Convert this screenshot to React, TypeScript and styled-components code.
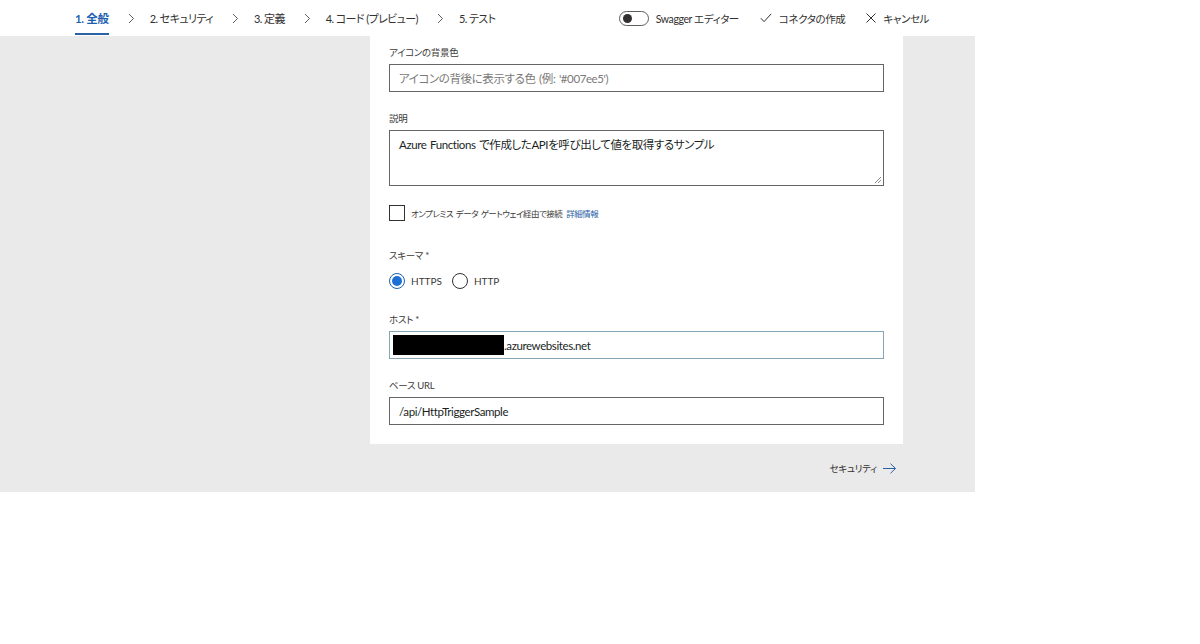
import React from 'react';
import styled, { createGlobalStyle } from 'styled-components';

const GlobalStyle = createGlobalStyle`
  html, body {
    margin: 0;
    padding: 0;
    background: #ffffff;
  }
  body {
    font-family: Lato, 'Noto Sans CJK JP', sans-serif;
    font-feature-settings: 'palt';
    color: #323130;
  }
`;

const Frame = styled.div`
  width: 975px;
  height: 492px;
  display: flex;
  flex-direction: column;
  background: #eaeaea;
`;

const TopBar = styled.div`
  height: 36px;
  background: #ffffff;
  display: flex;
  align-items: stretch;
  justify-content: space-between;
  padding-left: 75px;
  padding-right: 46px;
`;

const Steps = styled.div`
  display: flex;
  align-items: stretch;
`;

const Step = styled.div<{ $active?: boolean }>`
  position: relative;
  display: flex;
  align-items: center;
  font-size: ${p => (p.$active ? 11.5 : 11)}px;
  letter-spacing: ${p => (p.$active ? -0.3 : -0.6)}px;
  color: ${p => (p.$active ? '#1d5fb0' : '#323130')};
  font-weight: ${p => (p.$active ? 700 : 400)};
  white-space: nowrap;
  &::after {
    content: '';
    position: absolute;
    left: 0;
    right: 0;
    bottom: 1px;
    height: 2px;
    background: ${p => (p.$active ? '#2a62a8' : 'transparent')};
  }
`;

const Chevron = styled.div`
  display: flex;
  align-items: center;
  padding: 0 15px 0 19px;
  color: #605e5c;
`;

const Actions = styled.div`
  display: flex;
  align-items: center;
  gap: 21px;
  font-size: 10.5px;
  letter-spacing: -0.4px;
`;

const Action = styled.div`
  display: flex;
  align-items: center;
  gap: 7px;
  white-space: nowrap;
  color: #323130;
`;

const Toggle = styled.div`
  width: 25px;
  height: 13px;
  border: 1px solid #605e5c;
  border-radius: 8px;
  display: flex;
  align-items: center;
  padding-left: 3px;
  &::before {
    content: '';
    width: 9px;
    height: 9px;
    border-radius: 50%;
    background: #323130;
  }
`;

const Body = styled.div`
  flex: 1;
  display: flex;
  flex-direction: column;
  align-items: flex-start;
  padding-left: 370px;
`;

const Card = styled.div`
  width: 533px;
  background: #ffffff;
  padding: 8px 19px 19px 19px;
  box-sizing: border-box;
  display: flex;
  flex-direction: column;
`;

const Field = styled.div<{ $gap?: number }>`
  display: flex;
  flex-direction: column;
  margin-top: ${p => p.$gap ?? 0}px;
`;

const Label = styled.div`
  font-size: 9.5px;
  letter-spacing: -0.3px;
  color: #3b3a39;
  height: 20px;
  line-height: 18px;
`;

const Input = styled.div<{ $focus?: boolean; $placeholder?: boolean; $h?: number }>`
  height: ${p => p.$h ?? 28}px;
  box-sizing: border-box;
  border: 1px solid ${p => (p.$focus ? '#86a6b6' : '#666666')};
  display: flex;
  align-items: ${p => (p.$h ? 'flex-start' : 'center')};
  padding: ${p => (p.$h ? '5px 9px' : '0 9px')};
  font-size: 11.5px;
  letter-spacing: -0.4px;
  word-spacing: 1px;
  color: ${p => (p.$placeholder ? '#7a7978' : '#201f1e')};
  position: relative;
  white-space: pre;
`;

const Grip = styled.svg`
  position: absolute;
  right: 1px;
  bottom: 1px;
`;

const Redacted = styled.span`
  display: inline-block;
  width: 111px;
  height: 20px;
  background: #000000;
  margin-left: -6px;
`;

const CheckRow = styled.div`
  display: flex;
  align-items: center;
  gap: 6px;
  margin-top: 19px;
  font-size: 8.5px;
  letter-spacing: -0.5px;
  word-spacing: 1px;
  color: #3b3a39;
`;

const Box = styled.div`
  width: 16px;
  height: 16px;
  box-sizing: border-box;
  border: 1px solid #323130;
`;

const Link = styled.span`
  color: #2a62a8;
  margin-left: 4px;
`;

const RadioRow = styled.div`
  display: flex;
  align-items: center;
  gap: 6px;
  height: 22px;
  margin-top: 3px;
  font-size: 10px;
  color: #3b3a39;
`;

const Radio = styled.div<{ $on?: boolean }>`
  width: 16px;
  height: 16px;
  box-sizing: border-box;
  border-radius: 50%;
  border: 1px solid ${p => (p.$on ? '#1d5fb0' : '#323130')};
  display: flex;
  align-items: center;
  justify-content: center;
  margin-left: ${p => (p.$on ? 0 : 4)}px;
  &::before {
    content: '';
    width: 10px;
    height: 10px;
    border-radius: 50%;
    background: ${p => (p.$on ? '#1d6fd6' : 'transparent')};
  }
`;

const Footer = styled.div`
  width: 533px;
  display: flex;
  justify-content: flex-end;
  align-items: center;
  padding: 17px 6px 0 0;
  box-sizing: border-box;
  gap: 6px;
  font-size: 9.5px;
  letter-spacing: -0.3px;
  color: #323130;
`;

const ChevronIcon = () => (
  <svg width="7" height="11" viewBox="0 0 7 11">
    <path d="M1 1l4.5 4.5L1 10" fill="none" stroke="#605e5c" strokeWidth="1" />
  </svg>
);

export default function App() {
  const steps = ['1. 全般', '2. セキュリティ', '3. 定義', '4. コード (プレビュー)', '5. テスト'];
  return (
    <>
      <GlobalStyle />
      <Frame>
        <TopBar>
          <Steps>
            {steps.map((s, i) => (
              <React.Fragment key={s}>
                <Step $active={i === 0}>{s}</Step>
                {i < steps.length - 1 && (
                  <Chevron>
                    <ChevronIcon />
                  </Chevron>
                )}
              </React.Fragment>
            ))}
          </Steps>
          <Actions>
            <Action>
              <Toggle />
              Swagger エディター
            </Action>
            <Action>
              <svg width="12" height="10" viewBox="0 0 12 10">
                <path d="M0.8 5.2l3.3 3.4L11.2 0.8" fill="none" stroke="#323130" strokeWidth="1" />
              </svg>
              コネクタの作成
            </Action>
            <Action>
              <svg width="10" height="10" viewBox="0 0 10 10">
                <path d="M0.5 0.5l9 9M9.5 0.5l-9 9" fill="none" stroke="#323130" strokeWidth="1" />
              </svg>
              キャンセル
            </Action>
          </Actions>
        </TopBar>
        <Body>
          <Card>
            <Field>
              <Label>アイコンの背景色</Label>
              <Input $placeholder>アイコンの背後に表示する色 (例: '#007ee5')</Input>
            </Field>
            <Field $gap={18}>
              <Label>説明</Label>
              <Input $h={56}>
                {'Azure Functions で作成したAPIを呼び出して値を取得するサンプル'}
                <Grip width="8" height="8" viewBox="0 0 8 8">
                  <path d="M7 1L1 7M7 4L4 7" stroke="#8a8886" strokeWidth="1" />
                </Grip>
              </Input>
            </Field>
            <CheckRow>
              <Box />
              <span>
                オンプレミス データ ゲートウェイ経由で接続
                <Link>詳細情報</Link>
              </span>
            </CheckRow>
            <Field $gap={26}>
              <Label>スキーマ *</Label>
              <RadioRow>
                <Radio $on />
                HTTPS
                <Radio />
                HTTP
              </RadioRow>
            </Field>
            <Field $gap={19}>
              <Label>ホスト *</Label>
              <Input $focus>
                <Redacted />
                .azurewebsites.net
              </Input>
            </Field>
            <Field $gap={18}>
              <Label>ベース URL</Label>
              <Input>/api/HttpTriggerSample</Input>
            </Field>
          </Card>
          <Footer>
            セキュリティ
            <svg width="14" height="11" viewBox="0 0 14 11">
              <path d="M0 5.5h12.5M7.5 0.7l5 4.8-5 4.8" fill="none" stroke="#2a62a8" strokeWidth="1" />
            </svg>
          </Footer>
        </Body>
      </Frame>
    </>
  );
}
